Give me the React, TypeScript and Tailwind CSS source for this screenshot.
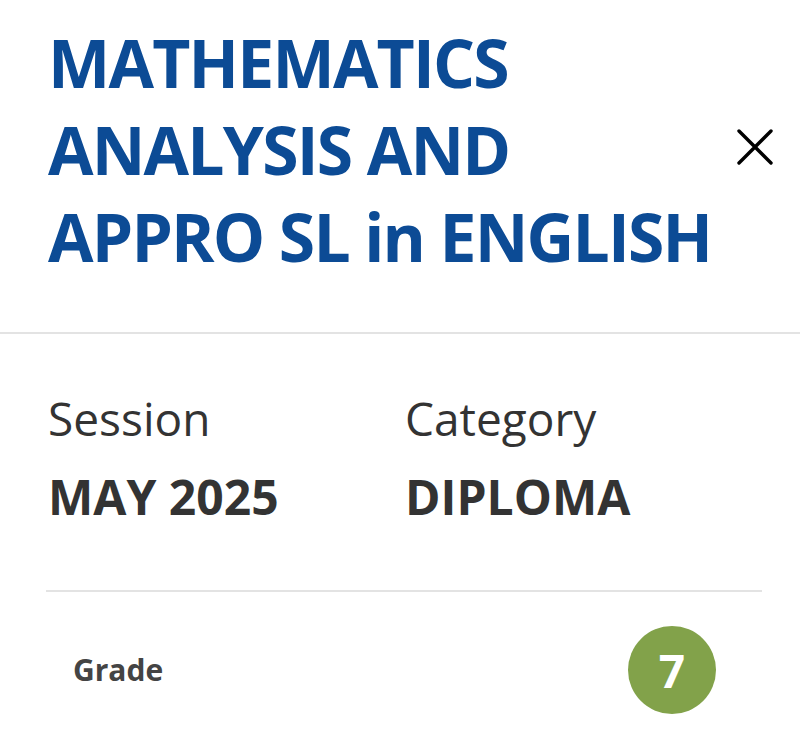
import React from "react";

export default function App() {
  return (
    <div className="w-[800px] h-[743px] bg-white overflow-hidden" style={{ fontFamily: '"Open Sans", "Noto Sans", sans-serif' }}>
      <div className="flex items-center pl-[48px] pr-[27px] pt-[19px] pb-[52px]">
        <h1 className="flex-1 text-[66px] leading-[87px] font-bold text-[#0c4b95] tracking-[-1.8px]">
          MATHEMATICS
          <br />
          ANALYSIS AND
          <br />
          APPRO SL in ENGLISH
        </h1>
        <button className="w-[36px] h-[36px] flex items-center justify-center mt-[-6px]" aria-label="Close">
          <svg width="36" height="36" viewBox="0 0 36 36" fill="none">
            <path d="M2 2 L34 34 M34 2 L2 34" stroke="#000" strokeWidth="3.4" strokeLinecap="round" />
          </svg>
        </button>
      </div>
      <div className="h-[2px] bg-[#e3e3e3]" />
      <div className="pl-[48px] pt-[56px] flex">
        <div className="w-[357px]">
          <div className="text-[46px] leading-[56px] text-[#333]">Session</div>
          <div className="mt-[23px] text-[48px] leading-[56px] font-bold text-[#333]">MAY 2025</div>
        </div>
        <div>
          <div className="text-[46px] leading-[56px] text-[#333]">Category</div>
          <div className="mt-[23px] text-[48px] leading-[56px] font-bold text-[#333]">DIPLOMA</div>
        </div>
      </div>
      <div className="ml-[46px] mr-[38px] mt-[65px] h-[2px] bg-[#e3e3e3]" />
      <div className="ml-[73px] mr-[84px] mt-[34px] flex items-center justify-between">
        <div className="text-[30px] leading-[36px] font-bold text-[#444]">Grade</div>
        <div className="w-[88px] h-[88px] rounded-full bg-[#82a24a] flex items-center justify-center text-white text-[46px] font-bold leading-none">
          7
        </div>
      </div>
    </div>
  );
}
